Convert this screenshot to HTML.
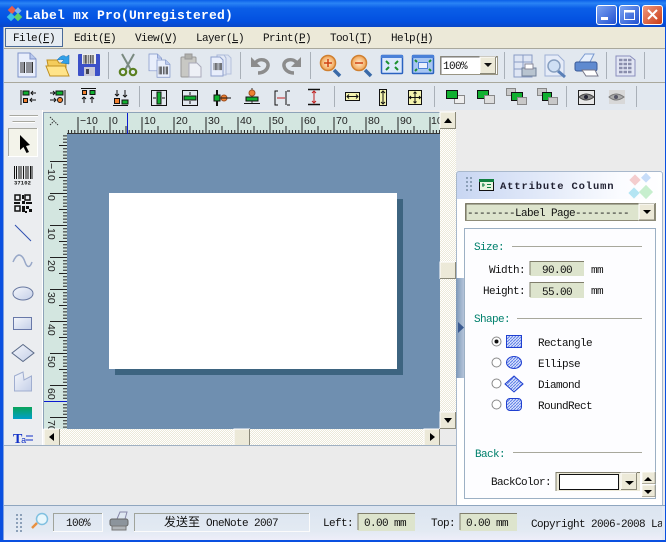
<!DOCTYPE html>
<html><head><meta charset="utf-8"><style>
html,body{margin:0;padding:0;background:#ebebeb;overflow:hidden}
svg{display:block;position:absolute;left:0;top:0}
text{font-family:"Liberation Mono","Noto Sans CJK SC",monospace;font-size:11px;letter-spacing:-.6px;fill:#111}
text.t{font-family:"Liberation Sans",sans-serif;font-size:10.500px;letter-spacing:0;fill:#222}
.g{fill:#00806c}
</style></head><body>
<svg width="666" height="542" viewBox="0 0 666 542" xmlns="http://www.w3.org/2000/svg">
<defs>
<linearGradient id="tb" x1="0" y1="0" x2="0" y2="1"><stop offset="0" stop-color="#0a5fe8"/><stop offset=".12" stop-color="#2a84f5"/><stop offset=".3" stop-color="#0b5fe8"/><stop offset=".8" stop-color="#0350e0"/><stop offset="1" stop-color="#0a47c8"/></linearGradient>
<linearGradient id="bb" x1="0" y1="0" x2="1" y2="1"><stop offset="0" stop-color="#7fa6f2"/><stop offset="1" stop-color="#1f4fd0"/></linearGradient>
<linearGradient id="br" x1="0" y1="0" x2="1" y2="1"><stop offset="0" stop-color="#f09a80"/><stop offset="1" stop-color="#c93a14"/></linearGradient>
<linearGradient id="ph" x1="0" y1="0" x2="1" y2="0"><stop offset="0" stop-color="#c8d6f2"/><stop offset=".8" stop-color="#fbfcff"/><stop offset="1" stop-color="#fff"/></linearGradient>
<linearGradient id="st" x1="0" y1="0" x2="0" y2="1"><stop offset="0" stop-color="#dbe4f0"/><stop offset=".75" stop-color="#e3eaf3"/><stop offset="1" stop-color="#eeeef9"/></linearGradient>
<linearGradient id="gr" x1="0" y1="0" x2="0" y2="1"><stop offset="0" stop-color="#0aa35a"/><stop offset="1" stop-color="#00a0c8"/></linearGradient>
<linearGradient id="sh" x1="0" y1="0" x2="1" y2="1"><stop offset="0" stop-color="#f4f6fb"/><stop offset="1" stop-color="#c4cfe8"/></linearGradient>
<linearGradient id="cb" x1="0" y1="0" x2="1" y2="0"><stop offset="0" stop-color="#7d98b8"/><stop offset="1" stop-color="#b5c5da"/></linearGradient>
<pattern id="dith" width="2" height="2" patternUnits="userSpaceOnUse"><rect width="2" height="2" fill="#ece9d8"/><rect width="1" height="1" fill="#fff"/><rect x="1" y="1" width="1" height="1" fill="#fff"/></pattern>
<pattern id="hatch" width="3" height="3" patternUnits="userSpaceOnUse"><rect width="3" height="3" fill="#d8e2fb"/><path d="M0 3L3 0" stroke="#5f7fe8" stroke-width="1"/></pattern>
<pattern id="rh" x="109.500" y="112" width="32" height="22" patternUnits="userSpaceOnUse"><path d="M.5 5V22M3.700 18V22M6.900 18V22M10.100 18V22M13.300 18V22M16.500 14V22M19.700 18V22M22.900 18V22M26.100 18V22M29.300 18V22" stroke="#222" fill="none"/></pattern>
<pattern id="rv" x="44" y="193" width="23" height="32" patternUnits="userSpaceOnUse"><path d="M6 .5H23M19 3.700H23M19 6.900H23M19 10.100H23M19 13.300H23M15 16.500H23M19 19.700H23M19 22.900H23M19 26.100H23M19 29.300H23" stroke="#222" fill="none"/></pattern>
<g id="btn"><rect width="16" height="17" fill="#ece9d8"/><path d="M0 17V0H16" fill="none" stroke="#fff"/><path d="M0 16.500H15.500V0" fill="none" stroke="#8a8878"/></g>
<g id="bars"><path d="M0 0V11M2 0V11M3.500 0V11M6 0V11M8 0V11M10 0V11M11.500 0V11" stroke="#333" stroke-width="1" fill="none"/></g>
<g id="doc"><path d="M0 0H12L18 6V24H0Z" fill="#e8eefb" stroke="#7f93c8"/><path d="M12 0V6H18" fill="#b9c9ee" stroke="#7f93c8"/></g>
<radialGradient id="lens"><stop offset="0" stop-color="#fff0d0"/><stop offset="1" stop-color="#f0a050"/></radialGradient>
</defs>

<!-- base -->
<rect width="666" height="542" fill="#ebebeb"/>
<rect width="666" height="27" fill="url(#tb)"/>
<rect y="27" width="666" height="22" fill="#ece9d8"/>
<rect y="49" width="666" height="61" fill="#e2e8ef"/>
<path d="M0 48.500H666M0 82.500H666" stroke="#a9a89c"/>
<rect y="83" width="666" height="27" fill="#e2e8ef"/>
<rect x="0" y="110" width="666" height="3" fill="#ebebeb"/>

<!-- title -->
<g transform="translate(6,7)"><rect x="3" y="0" width="6" height="6" fill="#e95d4a" transform="rotate(45 6 3)"/><rect x="10" y="1" width="5" height="5" fill="#7fb2f0" transform="rotate(45 12 3)"/><rect x="2" y="7" width="6" height="6" fill="#39c0e8" transform="rotate(45 5 10)"/><rect x="9" y="7" width="6" height="6" fill="#5ed06a" transform="rotate(45 12 10)"/></g>
<text x="25" y="19" style="font-size:13px;font-weight:bold;fill:#fff;letter-spacing:.2px">Label mx Pro(Unregistered)</text>
<rect x="596.500" y="5.500" width="20" height="19" rx="2.500" fill="url(#bb)" stroke="#fff"/><rect x="601" y="17" width="7" height="3" fill="#fff"/>
<rect x="619.500" y="5.500" width="20" height="19" rx="2.500" fill="url(#bb)" stroke="#fff"/><rect x="624.500" y="10.500" width="10" height="9" fill="none" stroke="#fff"/><rect x="624" y="10" width="11" height="2.500" fill="#fff"/>
<rect x="642.500" y="5.500" width="20" height="19" rx="2.500" fill="url(#br)" stroke="#fff"/><path d="M648 10L657 19M657 10L648 19" stroke="#fff" stroke-width="2"/>

<!-- menu -->
<rect x="5.500" y="28.500" width="57" height="18" fill="#e6ecf2" stroke="#4a6a98"/>
<text x="13" y="41">File(<tspan text-decoration="underline">F</tspan>)</text>
<text x="74" y="41">Edit(<tspan text-decoration="underline">E</tspan>)</text>
<text x="135" y="41">View(<tspan text-decoration="underline">V</tspan>)</text>
<text x="196" y="41">Layer(<tspan text-decoration="underline">L</tspan>)</text>
<text x="263" y="41">Print(<tspan text-decoration="underline">P</tspan>)</text>
<text x="330" y="41">Tool(<tspan text-decoration="underline">T</tspan>)</text>
<text x="391" y="41">Help(<tspan text-decoration="underline">H</tspan>)</text>

<!-- toolbar separators -->
<path d="M108.500 52V79M240.500 52V79M310.500 52V79M504.500 52V79M606.500 52V79M644.500 52V79M139.500 86V107M434.500 86V107M566.500 86V107M636.500 86V107M334.500 86V107" stroke="#a9b0b8"/>

<!-- toolbar 1 icons -->
<use href="#doc" x="18" y="53"/><use href="#bars" x="21" y="62"/>
<path d="M47 60H57L59 63H66V76H50Z" fill="#f4cc5c" stroke="#c09020"/><path d="M46 66H65L69 76H50Z" fill="#ffe48a" stroke="#c09020"/><path d="M57 60Q63 53 66 57L69 55L69 64L61 63L64 60Q61 59 57 60Z" fill="#30a0e8" stroke="#2070b0" stroke-width=".5"/>
<rect x="78" y="54" width="22" height="22" rx="1" fill="#3c50c8"/><rect x="82" y="54" width="14" height="10" fill="#eee"/><use href="#bars" transform="translate(84,55) scale(.8)"/><rect x="84" y="67" width="11" height="9" fill="#c8c8d8"/><rect x="86" y="69" width="3" height="5" fill="#445"/>
<path d="M122 54L131 70M134 54L125 70" stroke="#7a8a80" stroke-width="2"/><circle cx="123" cy="72" r="3.200" fill="none" stroke="#5a8020" stroke-width="2.200"/><circle cx="133" cy="72" r="3.200" fill="none" stroke="#5a8020" stroke-width="2.200"/>
<g transform="translate(149,54) scale(.7)"><use href="#doc"/></g><g transform="translate(157,60) scale(.72)"><use href="#doc"/><use href="#bars" x="3" y="9"/></g>
<rect x="181" y="57" width="15" height="20" rx="1" fill="#c8c8c4" stroke="#999"/><rect x="185" y="54" width="7" height="5" fill="#b0b0ac" stroke="#999"/><path d="M189 63H197L201 67V77H189Z" fill="#eef0f6" stroke="#aab"/>
<path d="M222 55H228L231 58V74H222Z" fill="#dde4f2" stroke="#b6c2dc"/><path d="M217 55H224L226 58V75H217Z" fill="#e2e8f5" stroke="#aab8d8"/><path d="M211 57H220L223 60V76H211Z" fill="#e8eefb" stroke="#8fa0cc"/><use href="#bars" transform="translate(214,63) scale(.65)"/>
<path d="M251 57V67H261Z" fill="#8c8c8c"/><path d="M255 63C260 57 269 60 268 66C267 71 262 73 258 73" fill="none" stroke="#8c8c8c" stroke-width="3.500"/>
<path d="M301 57V67H291Z" fill="#8c8c8c"/><path d="M297 63C292 57 283 60 284 66C285 71 290 73 294 73" fill="none" stroke="#8c8c8c" stroke-width="3.500"/>
<path d="M334 70L340 76" stroke="#3a6aa8" stroke-width="3.500"/><circle cx="328" cy="63" r="7.500" fill="url(#lens)" stroke="#d08030" stroke-width="1.500"/><path d="M324 63H332M328 59V67" stroke="#d04010" stroke-width="1.500"/>
<path d="M365 70L371 76" stroke="#3a6aa8" stroke-width="3.500"/><circle cx="359" cy="63" r="7.500" fill="url(#lens)" stroke="#d08030" stroke-width="1.500"/><path d="M355 63H363" stroke="#d04010" stroke-width="1.500"/>
<rect x="381.500" y="55.500" width="21" height="18" rx="1" fill="#dbe8fb" stroke="#2a62c0" stroke-width="1.500"/><rect x="381" y="55" width="22" height="3" fill="#4a80d8"/><path d="M386 61L389 64M398 61L395 64M386 70L389 67M398 70L395 67" stroke="#1a9030" stroke-width="2"/>
<rect x="412.500" y="55.500" width="21" height="18" rx="1" fill="#a8c6f2" stroke="#2a62c0" stroke-width="1.500"/><rect x="412" y="55" width="22" height="3" fill="#4a80d8"/><rect x="418.500" y="62.500" width="9" height="6" fill="#e8f0fc" stroke="#4a80d8"/><path d="M415 60L417 62M431 60L429 62M415 71L417 69M431 71L429 69" stroke="#1a9030" stroke-width="2"/>
<rect x="440.500" y="56.500" width="57" height="18" fill="#fff" stroke="#9a9684"/><path d="M441 57H497M441 57V74" stroke="#777" fill="none"/>
<text x="443" y="69">100%</text>
<use href="#btn" transform="translate(480,57)"/><path d="M484 63H492L488 67Z" fill="#111"/>
<rect x="514" y="55" width="18" height="22" fill="#dfe6f4" stroke="#8a9cc4"/><path d="M514 62H532M523 55V70M514 69H526" stroke="#8a9cc4"/><path d="M522 68H536V76H522Z" fill="#b8c4d0" stroke="#708098"/><rect x="525" y="64" width="8" height="5" fill="#fff" stroke="#889"/>
<path d="M545 55H558L564 61V76H545Z" fill="#e6ecf8" stroke="#9fb0d4"/><path d="M558 71L565 77" stroke="#5a80b8" stroke-width="3"/><circle cx="554" cy="66" r="6" fill="#cfe0f4" stroke="#88a0c0" stroke-width="1.500"/>
<path d="M579 62L585 54H594L590 62Z" fill="#e8f0fc" stroke="#7a9ad0"/><rect x="575" y="62" width="22" height="9" rx="2" fill="#5f8ad0" stroke="#3a5a98"/><path d="M582 70H595L598 76H586Z" fill="#fff" stroke="#778"/>
<path d="M616 56H630L635 60V76H616Z" fill="#e2e6f4" stroke="#8a8ebc"/><path d="M619 60H632M619 64H632M619 68H632M619 72H632" stroke="#8a8eac" stroke-width="2.500" stroke-dasharray="3.500 1"/>

<!-- toolbar 2 icons -->
<g fill="none" stroke="#111">
<g><path d="M21 90V105"/><rect x="23" y="91" width="6" height="4" fill="#10b030"/><rect x="23.500" y="98.500" width="4" height="4" fill="#f08030"/><path d="M36 93H31M33 91L31 93L33 95M36 100H30M32 98L30 100L32 102"/></g>
<g><path d="M65 90V105"/><rect x="56" y="91" width="7" height="4" fill="#10b030"/><circle cx="60" cy="100" r="2.500" fill="#f08030"/><path d="M50 93H55M53 91L55 93L53 95M50 100H56M54 98L56 100L54 102"/></g>
<g><path d="M81 88.500H96"/><rect x="82.500" y="90.500" width="4" height="4" fill="#f08030"/><rect x="90" y="90.500" width="5" height="4" fill="#10b030"/><path d="M84 103V97M82 99L84 97L86 99M92 103V97M90 99L92 97L94 99"/></g>
<g><path d="M113 105.500H128"/><rect x="114.500" y="98.500" width="5" height="5" fill="#f08030"/><rect x="122" y="100" width="6" height="4" fill="#10b030"/><path d="M117 90V96M115 94L117 96L119 94M125 90V97M123 95L125 97L127 95"/></g>
<rect x="151.500" y="90.500" width="15" height="15"/><rect x="157" y="92" width="4" height="12" fill="#10b030"/><path d="M153 98H156M165 98H162"/>
<rect x="182.500" y="90.500" width="15" height="15"/><rect x="184" y="96" width="12" height="4" fill="#10b030"/><path d="M190 92V95M190 104V101"/>
<path d="M217 90V106" stroke-width="2"/><rect x="214" y="95" width="6" height="6" fill="#10b030"/><circle cx="224" cy="98" r="3" fill="#f08030" stroke="#a05020"/><path d="M221 98H231"/>
<path d="M252 88V103" stroke="#333"/><circle cx="252" cy="93" r="3" fill="#f08030" stroke="#a05020"/><rect x="246" y="97" width="12" height="4" fill="#10b030"/><path d="M244 103.500H260"/>
<path d="M278 91H275V105H278M290 91H287M287 105H290M286 91V105" stroke="#111"/><path d="M277 98H285" stroke="#c02020"/>
<path d="M308 89.500H320M308 104.500H320" stroke-width="1.500"/><path d="M314 91V103M312 93L314 91L316 93M312 101L314 103L316 101" stroke="#c02020"/>
<rect x="345.500" y="92.500" width="14" height="8" fill="#f4f4b0"/><path d="M347 96.500H358M349 94.500L347 96.500L349 98.500M356 94.500L358 96.500L356 98.500"/>
<rect x="379.500" y="89.500" width="7" height="16" fill="#f4f4b0"/><path d="M383 91V104M381 93L383 91L385 93M381 102L383 104L385 102"/>
<rect x="408.500" y="90.500" width="13" height="14" fill="#f4f4b0"/><path d="M415 92V103M409 97.500H421M413.500 93.500L415 92L416.500 93.500M413.500 101.500L415 103L416.500 101.500M411 96L409.500 97.500L411 99M419 96L420.500 97.500L419 99"/>
</g>
<rect x="454.500" y="95.500" width="10" height="8" fill="#eee" stroke="#888"/><rect x="446.500" y="90.500" width="11" height="8" fill="#10b030" stroke="#111"/>
<rect x="477.500" y="90.500" width="11" height="8" fill="#10b030" stroke="#111"/><rect x="484.500" y="95.500" width="10" height="8" fill="#ddd" stroke="#888"/>
<rect x="506.500" y="88.500" width="9" height="7" fill="#c8c8c8" stroke="#888"/><rect x="511.500" y="92.500" width="11" height="8" fill="#10b030" stroke="#111"/><rect x="517.500" y="97.500" width="9" height="7" fill="#c8c8c8" stroke="#888"/>
<rect x="537.500" y="88.500" width="9" height="7" fill="#c8c8c8" stroke="#888"/><rect x="542.500" y="92.500" width="9" height="8" fill="#10b030" stroke="#111"/><rect x="548.500" y="97.500" width="9" height="7" fill="#c8c8c8" stroke="#888"/>
<rect x="578.500" y="90.500" width="16" height="14" fill="#e8e8e8" stroke="#222"/><path d="M579 97Q586 91 594 97Q586 103 579 97Z" fill="#888" stroke="#444"/><circle cx="586" cy="97" r="2" fill="#223"/>
<rect x="609" y="90" width="16" height="14" fill="#d8d8d8"/><path d="M609 97Q616 91 624 97Q616 103 609 97Z" fill="#aaa" stroke="#777"/><circle cx="616" cy="97" r="2" fill="#556"/>

<!-- left tools -->
<rect x="3" y="110" width="39" height="335" fill="#ebedf0"/>
<path d="M9.500 115.500H38M12.500 121.500H35" stroke="#a8a8a0"/><path d="M9.500 116.500H38M12.500 122.500H35" stroke="#fff"/>
<rect x="8.500" y="128.500" width="29" height="28" fill="#f3f3ea" stroke="#fff"/><path d="M8.500 156V128.500H37" fill="none" stroke="#a8a8a0"/>
<path d="M20 135V150L23.500 147L26.500 153L29 152L26 146L30 145Z" fill="#000"/>
<path d="M14.500 166V179M16.500 166V179M19 166V179M21 166V179M23.500 166V179M26 166V179M28 166V179M30.500 166V179M32 166V179" stroke="#111"/>
<text x="14" y="184.500" style="font-size:5.500px;font-weight:bold;letter-spacing:.1px">37102</text>
<g fill="none" stroke="#111"><rect x="15" y="195" width="5" height="5" stroke-width="1.500"/><rect x="25" y="195" width="5" height="5" stroke-width="1.500"/><rect x="15" y="206" width="5" height="5" stroke-width="1.500"/></g>
<path d="M22 195h2v4h-2zM14 202h6v2h-6zM22 201h3v3h-3zM26 202h6v2h-6zM22 206h3v6h-3zM26 206h3v3h-3zM29 209h3v3h-3zM25 211h2v2h-2z" fill="#111"/>
<path d="M15 225L31 241" stroke="#3050b0"/>
<path d="M13 262C18 250 23 256 25 262C27 268 30 268 32 262" fill="none" stroke="#98a8c8" stroke-width="1.500"/>
<ellipse cx="23" cy="293.500" rx="10" ry="6.500" fill="url(#sh)" stroke="#6878a0"/>
<rect x="13.500" y="317.500" width="18" height="12" fill="url(#sh)" stroke="#6878a8"/>
<path d="M23 344.500L34 353L23 361.500L12 353Z" fill="url(#sh)" stroke="#5a6a88"/>
<path d="M14.500 378V391H31.500V376L24 380L23 372L14.500 376Z" fill="url(#sh)" stroke="#a0aed0"/>
<rect x="13" y="407" width="19" height="12" fill="url(#gr)"/>
<text x="13" y="443" style="font-family:'Liberation Serif',serif;font-size:14px;fill:#1030c8;font-weight:bold;letter-spacing:0">T</text>
<text x="21" y="443" style="font-size:9px;fill:#1030c8;letter-spacing:0">a</text>
<path d="M26 436H33M26 440H33" stroke="#1030c8"/>

<!-- ruler + canvas -->
<rect x="43" y="112" width="397" height="22" fill="#d3e6e0"/>
<rect x="43" y="134" width="24" height="295" fill="#d3e6e0"/>
<path d="M43 112.500H440M43.500 112V429" stroke="#8ea3b8" fill="none"/>
<path d="M42.500 110V445" stroke="#fff"/>
<rect x="67" y="134" width="373" height="295" fill="#6f8fb0"/>
<rect x="115" y="199" width="288" height="176" fill="#3d6480"/>
<rect x="109" y="193" width="288" height="176" fill="#fff"/>
<rect x="67" y="113" width="373" height="21" fill="url(#rh)"/>
<rect x="44" y="134" width="23" height="295" fill="url(#rv)"/>
<path d="M67 133.500H440" stroke="#333"/>
<path d="M127.500 113V134" stroke="#0a1ad0"/><path d="M44 401.500H67" stroke="#0a1ad0"/>
<path d="M50 117L58 125M50 125L54 121" stroke="#333" stroke-dasharray="1.500 1"/>
<text class="t" x="80" y="124">−10</text><text class="t" x="112" y="124">0</text><text class="t" x="144" y="124">10</text><text class="t" x="176" y="124">20</text><text class="t" x="208" y="124">30</text><text class="t" x="240" y="124">40</text><text class="t" x="272" y="124">50</text><text class="t" x="304" y="124">60</text><text class="t" x="336" y="124">70</text><text class="t" x="368" y="124">80</text><text class="t" x="400" y="124">90</text><text class="t" x="431" y="124">10</text>
<text class="t" transform="translate(48,163) rotate(90)">−10</text>
<text class="t" transform="translate(48,195) rotate(90)">0</text>
<text class="t" transform="translate(48,228) rotate(90)">10</text>
<text class="t" transform="translate(48,260) rotate(90)">20</text>
<text class="t" transform="translate(48,292) rotate(90)">30</text>
<text class="t" transform="translate(48,324) rotate(90)">40</text>
<text class="t" transform="translate(48,356) rotate(90)">50</text>
<text class="t" transform="translate(48,388) rotate(90)">60</text>
<text class="t" transform="translate(48,420) rotate(90)">70</text>

<!-- scrollbars -->
<rect x="440" y="112" width="16" height="317" fill="url(#dith)"/>
<rect x="44" y="429" width="396" height="16" fill="url(#dith)"/>
<use href="#btn" transform="translate(440,112)"/><path d="M444 123L448 118L452 123Z" fill="#000"/>
<use href="#btn" transform="translate(440,262)"/>
<use href="#btn" transform="translate(440,412)"/><path d="M444 418L448 423L452 418Z" fill="#000"/>
<use href="#btn" transform="translate(44,429)"/><path d="M54 433V441L49 437Z" fill="#000"/>
<use href="#btn" transform="translate(234,429)"/>
<use href="#btn" transform="translate(424,429)"/><path d="M430 433V441L435 437Z" fill="#000"/>
<path d="M4 445.500H456" stroke="#9fb0c2"/>

<!-- panel -->
<rect x="456" y="171" width="207" height="334" fill="#fff"/>
<rect x="457" y="172" width="206" height="27" fill="url(#ph)"/>
<path d="M456.500 278V174Q456.500 171.500 459 171.500H660Q662.500 171.500 662.500 174V505" fill="none" stroke="#a8b8cc"/>
<rect x="456" y="278" width="8" height="100" fill="url(#cb)"/>
<path d="M458 322L464 327.500L458 333Z" fill="#3a5a90"/>
<rect x="456" y="378" width="1" height="127" fill="#a8b8cc"/>
<g fill="#8ca0b8"><rect x="466" y="177" width="2" height="2"/><rect x="470" y="177" width="2" height="2"/><rect x="466" y="181" width="2" height="2"/><rect x="470" y="181" width="2" height="2"/><rect x="466" y="185" width="2" height="2"/><rect x="470" y="185" width="2" height="2"/><rect x="466" y="189" width="2" height="2"/><rect x="470" y="189" width="2" height="2"/></g>
<rect x="479.500" y="179.500" width="14" height="11" fill="#e8f4e0" stroke="#111"/><rect x="479" y="179" width="15" height="3" fill="#108040"/><path d="M482 185H485M487 184.500H491M487 187.500H491M483 183V187" stroke="#108040"/>
<text x="500" y="189" style="font-size:10.500px;font-weight:bold;fill:#223;letter-spacing:.85px">Attribute Column</text>
<g opacity=".38"><rect x="631" y="176" width="8" height="8" fill="#e88080" transform="rotate(45 635 180)"/><rect x="643" y="174" width="7" height="7" fill="#70a8f0" transform="rotate(45 646 177)"/><rect x="630" y="189" width="8" height="8" fill="#40c0e0" transform="rotate(45 634 193)"/><rect x="641" y="187" width="10" height="10" fill="#70d880" transform="rotate(45 646 192)"/></g>

<rect x="465.500" y="203.500" width="190" height="17" fill="#dde4cd" stroke="#8e8c78"/><path d="M466 204H655M466 204V220" stroke="#6e6c5c" fill="none"/>
<text x="467" y="216">--------Label Page---------</text>
<use href="#btn" transform="translate(639,204) scale(1,.97)"/><path d="M643 210H651L647 214Z" fill="#000"/>

<rect x="464.500" y="228.500" width="191" height="270" fill="#fdfdff" stroke="#9cb0c4"/>
<text class="g" x="474" y="250">Size:</text><path d="M512 246.500H642" stroke="#a8a89c"/>
<text x="489" y="273">Width:</text>
<rect x="530" y="261" width="54" height="15" fill="#dde4cd"/><path d="M530 275V261.500H584" fill="none" stroke="#807e6c"/>
<text x="542" y="273">90.00</text><text x="591" y="273">mm</text>
<text x="483" y="294">Height:</text>
<rect x="530" y="282" width="54" height="16" fill="#dde4cd"/><path d="M530 297V282.500H584" fill="none" stroke="#807e6c"/>
<text x="542" y="295">55.00</text><text x="591" y="294">mm</text>
<text class="g" x="474" y="322">Shape:</text><path d="M517 318.500H642" stroke="#a8a89c"/>

<g fill="#fff" stroke="#888"><circle cx="496.500" cy="341.500" r="4.500"/><circle cx="496.500" cy="362.500" r="4.500"/><circle cx="496.500" cy="383.500" r="4.500"/><circle cx="496.500" cy="404.500" r="4.500"/></g>
<circle cx="496.500" cy="341.500" r="2" fill="#111"/>
<rect x="506.500" y="335.500" width="15" height="12" fill="url(#hatch)" stroke="#2040d0"/>
<ellipse cx="514" cy="362.500" rx="7.500" ry="6" fill="url(#hatch)" stroke="#2040d0"/>
<path d="M514 376L523 384L514 392L505 384Z" fill="url(#hatch)" stroke="#2040d0"/>
<rect x="506.500" y="398.500" width="15" height="12" rx="3.500" fill="url(#hatch)" stroke="#2040d0"/>
<text x="538" y="346">Rectangle</text><text x="538" y="367">Ellipse</text><text x="538" y="388">Diamond</text><text x="538" y="409">RoundRect</text>

<text class="g" x="475" y="457">Back:</text><path d="M513 452.500H642" stroke="#a8a89c"/>
<text x="491" y="485">BackColor:</text>
<rect x="556" y="472" width="84" height="19" fill="#ece9d8"/><path d="M556 491V472.500H640" fill="none" stroke="#807e6c"/>
<rect x="559.500" y="474.500" width="59" height="15" fill="#fff" stroke="#111"/>
<use href="#btn" transform="translate(621,473)"/><path d="M625 481H634L629.500 485Z" fill="#000"/>
<use href="#btn" transform="translate(642,472) scale(.85,.7)"/><path d="M644 481H652L648 477Z" fill="#000"/>
<use href="#btn" transform="translate(642,485) scale(.85,.7)"/><path d="M644 490H652L648 494Z" fill="#000"/>

<!-- status bar -->
<rect x="0" y="505" width="666" height="35" fill="url(#st)"/>
<path d="M0 505.500H666" stroke="#8fa6bf"/>
<g fill="#8ca0b8"><rect x="16" y="514" width="2" height="2"/><rect x="20" y="514" width="2" height="2"/><rect x="16" y="518" width="2" height="2"/><rect x="20" y="518" width="2" height="2"/><rect x="16" y="522" width="2" height="2"/><rect x="20" y="522" width="2" height="2"/><rect x="16" y="526" width="2" height="2"/><rect x="20" y="526" width="2" height="2"/><rect x="16" y="530" width="2" height="2"/><rect x="20" y="530" width="2" height="2"/></g>
<path d="M32 528L37 523" stroke="#e89040" stroke-width="2.500"/><circle cx="42" cy="519" r="5.500" fill="#e8f6fc" stroke="#80c0e0" stroke-width="1.500"/>
<path d="M53.500 531V513.500H102" fill="none" stroke="#a0a49c"/><path d="M53 531.500H102.500V513" fill="none" stroke="#fbfbfb"/>
<text x="66" y="526">100%</text>
<path d="M117 519L120 512H127L125 519Z" fill="#dfe8f2" stroke="#88a"/><rect x="110" y="519" width="18" height="7" rx="2" fill="#8c949c" stroke="#666"/><rect x="112" y="526" width="14" height="4" fill="#b0b4b8" stroke="#777"/>
<path d="M134.500 531V513.500H309" fill="none" stroke="#a0a49c"/><path d="M134 531.500H309.500V513" fill="none" stroke="#fbfbfb"/>
<text x="164" y="526"><tspan style="font-size:12px;letter-spacing:0;font-family:'Noto Sans CJK SC',sans-serif">发送至</tspan> OneNote 2007</text>
<text x="323" y="526">Left:</text>
<rect x="358" y="514" width="57" height="17" fill="#dde4cd"/><path d="M358 530V513.500H415" fill="none" stroke="#807e6c"/>
<text x="364" y="526">0.00 mm</text>
<text x="431" y="526">Top:</text>
<rect x="460" y="514" width="57" height="17" fill="#dde4cd"/><path d="M460 530V513.500H517" fill="none" stroke="#807e6c"/>
<text x="466" y="526">0.00 mm</text>
<text x="531" y="527">Copyright 2006-2008 La</text>
<rect x="662" y="506" width="3" height="34" fill="#e3eaf3"/>

<!-- window frame -->
<rect x="0" y="27" width="3" height="515" fill="#0a50e0"/>
<rect x="3" y="27" width="1" height="513" fill="#7fa0e0"/>
<rect x="665" y="27" width="1" height="515" fill="#0a50e0"/>
<rect x="0" y="540" width="666" height="2" fill="#0a50e0"/>
</svg>
</body></html>
